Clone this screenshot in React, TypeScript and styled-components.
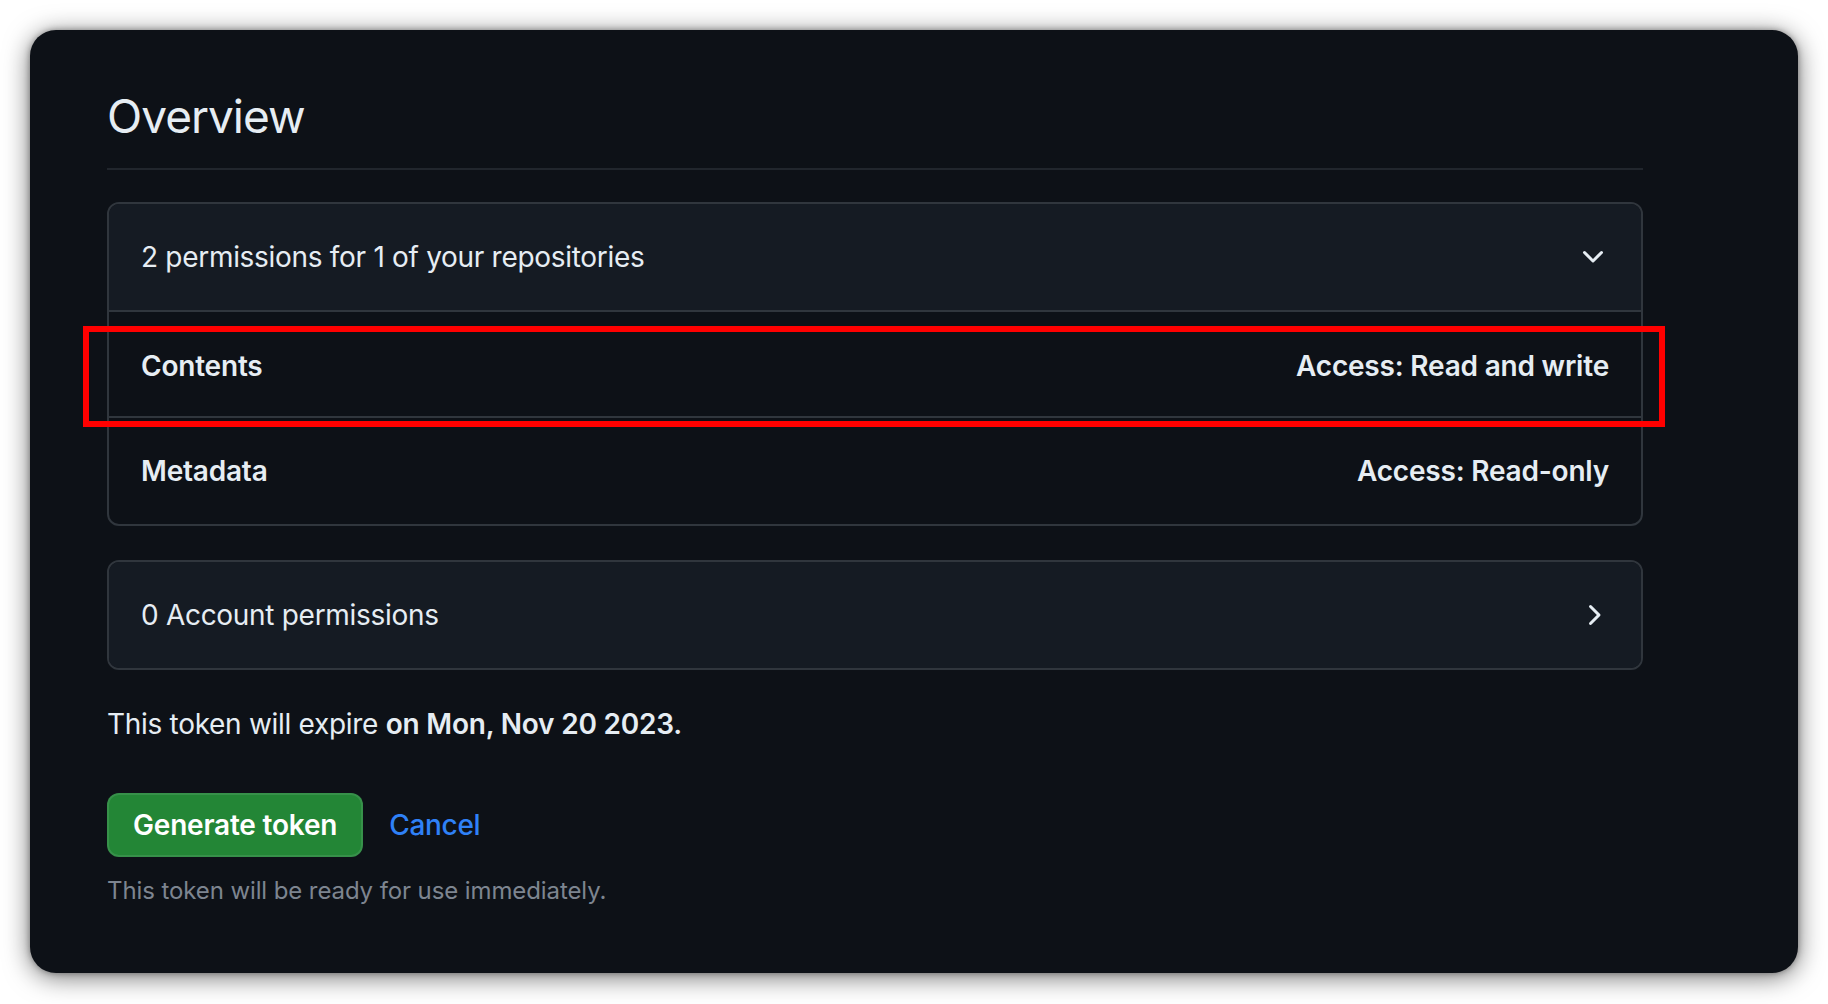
import React from "react";
import styled, { createGlobalStyle } from "styled-components";

const GlobalStyle = createGlobalStyle`
  html, body {
    margin: 0;
    padding: 0;
    background: #ffffff;
  }
  body {
    font-family: Inter, "Noto Sans", "Liberation Sans", sans-serif;
    -webkit-font-smoothing: antialiased;
  }
  * { box-sizing: border-box; }
`;

const Page = styled.div`
  padding: 30px;
  width: 1828px;
  height: 1004px;
`;

const Window = styled.section`
  width: 1768px;
  height: 943px;
  background: #0d1117;
  border-radius: 26px;
  box-shadow: 0 4px 26px rgba(0, 0, 0, 0.55), 0 0 6px rgba(0, 0, 0, 0.35);
  padding: 56px 155px 0 77px;
  color: #e6edf3;
`;

const Subhead = styled.h2`
  margin: 0 0 32px;
  padding-bottom: 22px;
  border-bottom: 2px solid #21262d;
  font-size: 46px;
  line-height: 60px;
  font-weight: 400;
  letter-spacing: -1px;
  color: #e6edf3;
`;

const Permissions = styled.div`
  position: relative;
`;

const Box = styled.div<{ $gap?: number }>`
  border: 2px solid #30363d;
  border-radius: 12px;
  overflow: hidden;
  margin-top: ${(p) => p.$gap ?? 0}px;
`;

const BoxHeader = styled.div<{ $divider?: boolean }>`
  display: flex;
  align-items: center;
  justify-content: space-between;
  background: #151b23;
  padding: 32px;
  font-size: 28px;
  line-height: 42px;
  letter-spacing: -0.3px;
  border-bottom: ${(p) => (p.$divider ? "2px solid #30363d" : "none")};
`;

const BoxRow = styled.div<{ $last?: boolean }>`
  display: flex;
  align-items: center;
  justify-content: space-between;
  padding: ${(p) => (p.$last ? "32px 32px 32px" : "33px 32px 29px")};
  font-size: 28px;
  line-height: 42px;
  font-weight: 600;
  letter-spacing: -0.2px;
  border-bottom: ${(p) => (p.$last ? "none" : "2px solid #30363d")};
`;

const Icon = styled.svg`
  width: 32px;
  height: 32px;
  fill: #e6edf3;
  flex: none;
`;

const Highlight = styled.div`
  position: absolute;
  left: -24px;
  right: -22px;
  top: 124px;
  height: 101px;
  border: 6px solid #ff0000;
  pointer-events: none;
`;

const Expire = styled.p`
  margin: 33px 0 0;
  font-size: 28px;
  line-height: 42px;
  letter-spacing: -0.3px;
  color: #e6edf3;

  strong {
    font-weight: 600;
    letter-spacing: -0.2px;
  }
`;

const Actions = styled.div`
  display: flex;
  align-items: center;
  gap: 26px;
  margin-top: 48px;
`;

const PrimaryButton = styled.button`
  height: 64px;
  padding: 0 24px;
  background: #238636;
  border: 2px solid rgba(240, 246, 252, 0.1);
  border-radius: 12px;
  color: #ffffff;
  font-family: inherit;
  font-size: 28px;
  font-weight: 600;
  line-height: 42px;
  letter-spacing: -0.2px;
  cursor: pointer;
`;

const CancelLink = styled.a`
  color: #2f81f7;
  font-size: 28px;
  font-weight: 500;
  line-height: 42px;
  letter-spacing: -0.3px;
  text-decoration: none;
`;

const Note = styled.p`
  margin: 16px 0 0;
  font-size: 24px;
  line-height: 36px;
  letter-spacing: -0.1px;
  color: #7d8590;
`;

const ChevronDown = () => (
  <Icon viewBox="0 0 16 16">
    <path d="M12.78 5.22a.749.749 0 0 1 0 1.06l-4.25 4.25a.749.749 0 0 1-1.06 0L3.22 6.28a.749.749 0 1 1 1.06-1.06L8 8.939l3.72-3.719a.749.749 0 0 1 1.06 0Z" />
  </Icon>
);

const ChevronRight = () => (
  <Icon viewBox="0 0 16 16">
    <path d="M6.22 3.22a.75.75 0 0 1 1.06 0l4.25 4.25a.75.75 0 0 1 0 1.06l-4.25 4.25a.751.751 0 0 1-1.042-.018.751.751 0 0 1-.018-1.042L9.94 8 6.22 4.28a.75.75 0 0 1 0-1.06Z" />
  </Icon>
);

const rows = [
  { name: "Contents", access: "Access: Read and write" },
  { name: "Metadata", access: "Access: Read-only" },
];

export default function App() {
  return (
    <Page>
      <GlobalStyle />
      <Window>
        <Subhead>Overview</Subhead>
        <Permissions>
          <Box>
            <BoxHeader $divider>
              <span>2 permissions for 1 of your repositories</span>
              <ChevronDown />
            </BoxHeader>
            {rows.map((r, i) => (
              <BoxRow key={r.name} $last={i === rows.length - 1}>
                <span>{r.name}</span>
                <span>{r.access}</span>
              </BoxRow>
            ))}
          </Box>
          <Highlight />
          <Box $gap={34}>
            <BoxHeader>
              <span>0 Account permissions</span>
              <ChevronRight />
            </BoxHeader>
          </Box>
        </Permissions>
        <Expire>
          This token will expire <strong>on Mon, Nov 20 2023.</strong>
        </Expire>
        <Actions>
          <PrimaryButton type="button">Generate token</PrimaryButton>
          <CancelLink href="#">Cancel</CancelLink>
        </Actions>
        <Note>This token will be ready for use immediately.</Note>
      </Window>
    </Page>
  );
}
